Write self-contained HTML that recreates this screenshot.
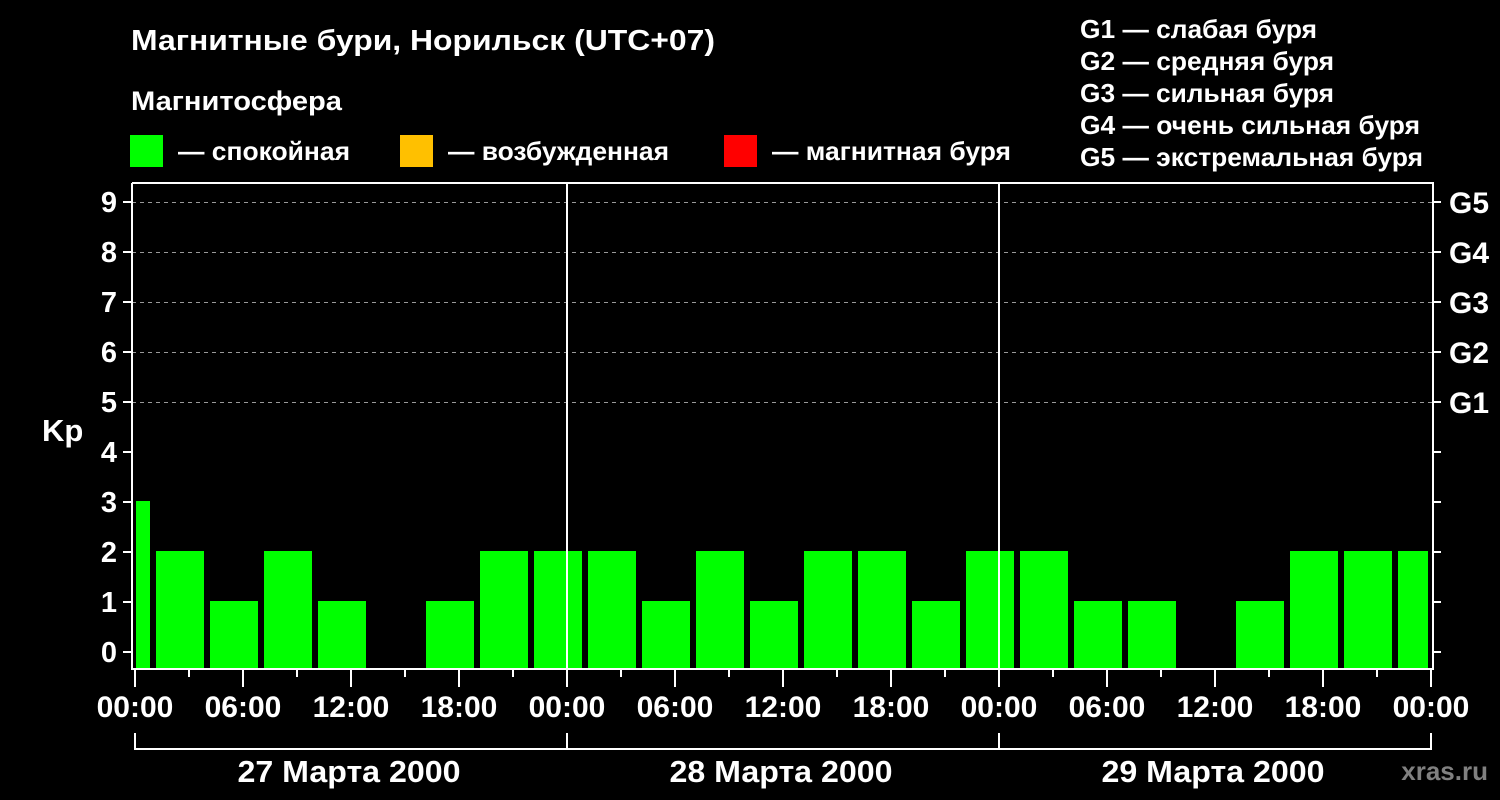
<!DOCTYPE html>
<html><head><meta charset="utf-8"><style>
html,body{margin:0;padding:0;background:#000;}
svg{display:block;}
text{font-family:"Liberation Sans",sans-serif;font-weight:bold;fill:#fff;}
</style></head><body>
<svg width="1500" height="800" viewBox="0 0 1500 800" xmlns="http://www.w3.org/2000/svg">
<rect width="1500" height="800" fill="#000"/>
<text x="131" y="50" font-size="29" textLength="584" lengthAdjust="spacingAndGlyphs">Магнитные бури, Норильск (UTC+07)</text>
<text x="131" y="110" font-size="27" textLength="211" lengthAdjust="spacingAndGlyphs">Магнитосфера</text>
<rect x="130" y="135" width="33" height="32" fill="#00ff00"/>
<text x="178" y="160" font-size="26" textLength="172" lengthAdjust="spacingAndGlyphs">— спокойная</text>
<rect x="400" y="135" width="33" height="32" fill="#ffc000"/>
<text x="448" y="160" font-size="26" textLength="221" lengthAdjust="spacingAndGlyphs">— возбужденная</text>
<rect x="724" y="135" width="33" height="32" fill="#ff0000"/>
<text x="772" y="160" font-size="26" textLength="239" lengthAdjust="spacingAndGlyphs">— магнитная буря</text>
<g font-size="26">
<text x="1080" y="38" textLength="237" lengthAdjust="spacingAndGlyphs">G1 — слабая буря</text>
<text x="1080" y="70" textLength="254" lengthAdjust="spacingAndGlyphs">G2 — средняя буря</text>
<text x="1080" y="102" textLength="254" lengthAdjust="spacingAndGlyphs">G3 — сильная буря</text>
<text x="1080" y="134" textLength="340" lengthAdjust="spacingAndGlyphs">G4 — очень сильная буря</text>
<text x="1080" y="166" textLength="343" lengthAdjust="spacingAndGlyphs">G5 — экстремальная буря</text>
</g>
<g stroke="#999" stroke-width="1" stroke-dasharray="4,4">
<line x1="132" y1="202.5" x2="1432" y2="202.5"/>
<line x1="132" y1="252.5" x2="1432" y2="252.5"/>
<line x1="132" y1="302.5" x2="1432" y2="302.5"/>
<line x1="132" y1="352.5" x2="1432" y2="352.5"/>
<line x1="132" y1="402.5" x2="1432" y2="402.5"/>
</g>
<g fill="#00ff00">
<rect x="136" y="501" width="14" height="167"/>
<rect x="156" y="551" width="48" height="117"/>
<rect x="210" y="601" width="48" height="67"/>
<rect x="264" y="551" width="48" height="117"/>
<rect x="318" y="601" width="48" height="67"/>
<rect x="426" y="601" width="48" height="67"/>
<rect x="480" y="551" width="48" height="117"/>
<rect x="534" y="551" width="48" height="117"/>
<rect x="588" y="551" width="48" height="117"/>
<rect x="642" y="601" width="48" height="67"/>
<rect x="696" y="551" width="48" height="117"/>
<rect x="750" y="601" width="48" height="67"/>
<rect x="804" y="551" width="48" height="117"/>
<rect x="858" y="551" width="48" height="117"/>
<rect x="912" y="601" width="48" height="67"/>
<rect x="966" y="551" width="48" height="117"/>
<rect x="1020" y="551" width="48" height="117"/>
<rect x="1074" y="601" width="48" height="67"/>
<rect x="1128" y="601" width="48" height="67"/>
<rect x="1236" y="601" width="48" height="67"/>
<rect x="1290" y="551" width="48" height="117"/>
<rect x="1344" y="551" width="48" height="117"/>
<rect x="1398" y="551" width="30" height="117"/>
</g>
<g stroke="#fff" stroke-width="2" fill="none">
<polyline points="132,183 1433,183 1433,669 132,669 132,183"/>
<line x1="567" y1="183" x2="567" y2="669"/>
<line x1="999" y1="183" x2="999" y2="669"/>
<path d="M123 202H132M123 252H132M123 302H132M123 352H132M123 402H132M123 452H132M123 502H132M123 552H132M123 602H132M123 652H132"/>
<path d="M1433 202H1441M1433 252H1441M1433 302H1441M1433 352H1441M1433 402H1441M1433 452H1441M1433 502H1441M1433 552H1441M1433 602H1441M1433 652H1441"/>
<path d="M135 669V687M243 669V687M351 669V687M459 669V687M567 669V687M675 669V687M783 669V687M891 669V687M999 669V687M1107 669V687M1215 669V687M1323 669V687M1431 669V687"/>
<path d="M189 669V677M297 669V677M405 669V677M513 669V677M621 669V677M729 669V677M837 669V677M945 669V677M1053 669V677M1161 669V677M1269 669V677M1377 669V677"/>
<path d="M135 733V749H1431V733M567 733V749M999 733V749"/>
</g>
<g font-size="29" text-anchor="end">
<text x="117" y="212">9</text><text x="117" y="262">8</text><text x="117" y="312">7</text>
<text x="117" y="362">6</text><text x="117" y="412">5</text><text x="117" y="462">4</text>
<text x="117" y="512">3</text><text x="117" y="562">2</text><text x="117" y="612">1</text>
<text x="117" y="662">0</text>
</g>
<text x="42" y="441" font-size="31">Kp</text>
<g font-size="30">
<text x="1449" y="213">G5</text><text x="1449" y="263">G4</text><text x="1449" y="313">G3</text>
<text x="1449" y="363">G2</text><text x="1449" y="413">G1</text>
</g>
<g font-size="30" text-anchor="middle">
<text x="135" y="717">00:00</text><text x="243" y="717">06:00</text><text x="351" y="717">12:00</text><text x="459" y="717">18:00</text>
<text x="567" y="717">00:00</text><text x="675" y="717">06:00</text><text x="783" y="717">12:00</text><text x="891" y="717">18:00</text>
<text x="999" y="717">00:00</text><text x="1107" y="717">06:00</text><text x="1215" y="717">12:00</text><text x="1323" y="717">18:00</text>
<text x="1431" y="717">00:00</text>
</g>
<g font-size="31" text-anchor="middle">
<text x="349" y="782" textLength="223" lengthAdjust="spacingAndGlyphs">27 Марта 2000</text>
<text x="781" y="782" textLength="223" lengthAdjust="spacingAndGlyphs">28 Марта 2000</text>
<text x="1213" y="782" textLength="223" lengthAdjust="spacingAndGlyphs">29 Марта 2000</text>
</g>
<text x="1488" y="780" font-size="26" text-anchor="end" style="fill:#808080">xras.ru</text>
</svg>
</body></html>
